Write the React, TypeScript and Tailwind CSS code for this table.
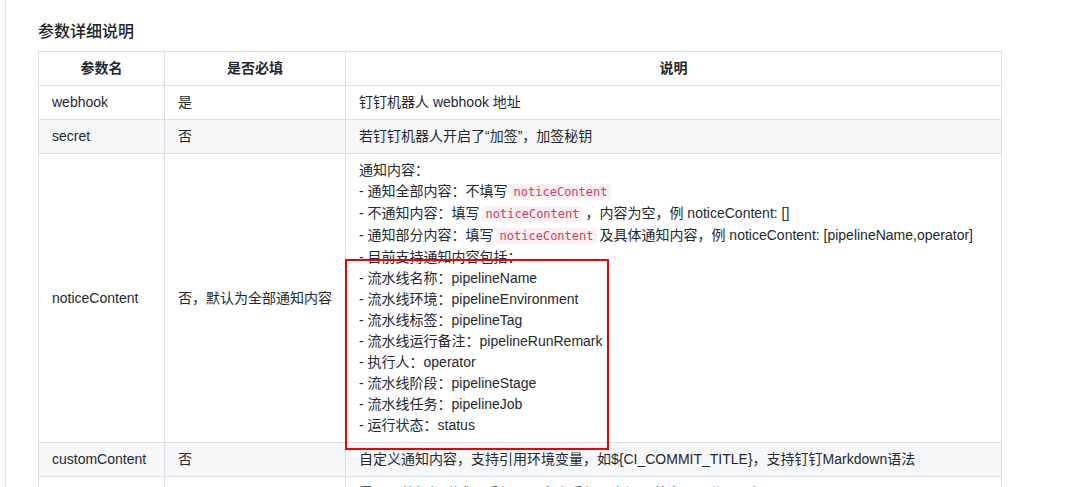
import React from 'react'

const cjk = '"Liberation Sans", "Noto Sans CJK SC", sans-serif'

function Code({ children }: { children: React.ReactNode }) {
  return (
    <code className="mx-[2px] rounded-[3px] bg-[#fbf0f3] px-[4px] py-[1px] font-['DejaVu_Sans_Mono',monospace] text-[12px] text-[#d63a5f]">
      {children}
    </code>
  )
}

const noticeLines: React.ReactNode[] = [
  '通知内容：',
  <>- 通知全部内容：不填写<Code>noticeContent</Code></>,
  <>- 不通知内容：填写<Code>noticeContent</Code>，内容为空，例 noticeContent: []</>,
  <>- 通知部分内容：填写<Code>noticeContent</Code>及具体通知内容，例 noticeContent: [pipelineName,operator]</>,
  '- 目前支持通知内容包括：',
  '- 流水线名称：pipelineName',
  '- 流水线环境：pipelineEnvironment',
  '- 流水线标签：pipelineTag',
  '- 流水线运行备注：pipelineRunRemark',
  '- 执行人：operator',
  '- 流水线阶段：pipelineStage',
  '- 流水线任务：pipelineJob',
  '- 运行状态：status',
]

const lines = (ls: React.ReactNode[]) => (
  <div>
    {ls.map((l, i) => (
      <div key={i}>{l}</div>
    ))}
  </div>
)

const rows: { name: string; required: string; desc: React.ReactNode }[] = [
  { name: 'webhook', required: '是', desc: '钉钉机器人 webhook 地址' },
  { name: 'secret', required: '否', desc: '若钉钉机器人开启了“加签”，加签秘钥' },
  { name: 'noticeContent', required: '否，默认为全部通知内容', desc: lines(noticeLines) },
  { name: 'customContent', required: '否', desc: '自定义通知内容，支持引用环境变量，如${CI_COMMIT_TITLE}，支持钉钉Markdown语法' },
  {
    name: 'atMobiles',
    required: '否',
    desc: lines([
      '需要@的钉钉群成员手机号，多个手机号之间用英文逗号分隔，如：138xxxx',
      '不填写则不@任何人',
    ]),
  },
]

export default function App() {
  return (
    <div className="h-[487px] overflow-hidden bg-white text-[14px] leading-[21px] text-[#24292f]" style={{ fontFamily: cjk }}>
      <div className="relative ml-[5px] h-full border-l border-[#e6e6e6] pl-[32px] pt-[20px]">
        <h3 className="mb-[7px] text-[16px] font-medium leading-[24px] text-[#1f2328]">参数详细说明</h3>
        <table className="w-[964px] table-fixed border-collapse">
          <colgroup>
            <col className="w-[126px]" />
            <col className="w-[181px]" />
            <col />
          </colgroup>
          <thead>
            <tr className="bg-white">
              <th className="border border-[#dcdfe3] px-[13px] py-[6px] text-center font-semibold">参数名</th>
              <th className="border border-[#dcdfe3] px-[13px] py-[6px] text-center font-semibold">是否必填</th>
              <th className="border border-[#dcdfe3] px-[13px] py-[6px] text-center font-semibold">说明</th>
            </tr>
          </thead>
          <tbody>
            {rows.map((r, i) => (
              <tr key={r.name} className={i % 2 === 1 ? 'bg-[#f6f7f9]' : 'bg-white'}>
                <td className="border border-[#dcdfe3] px-[13px] py-[6px] align-middle">{r.name}</td>
                <td className="border border-[#dcdfe3] px-[13px] py-[6px] align-middle">{r.required}</td>
                <td className="border border-[#dcdfe3] px-[13px] py-[6px] align-middle">{r.desc}</td>
              </tr>
            ))}
          </tbody>
        </table>

        {/* annotation box */}
        <div className="pointer-events-none absolute left-[339px] top-[259px] h-[191px] w-[264px] border-2 border-[#f00000]" />
      </div>
    </div>
  )
}
